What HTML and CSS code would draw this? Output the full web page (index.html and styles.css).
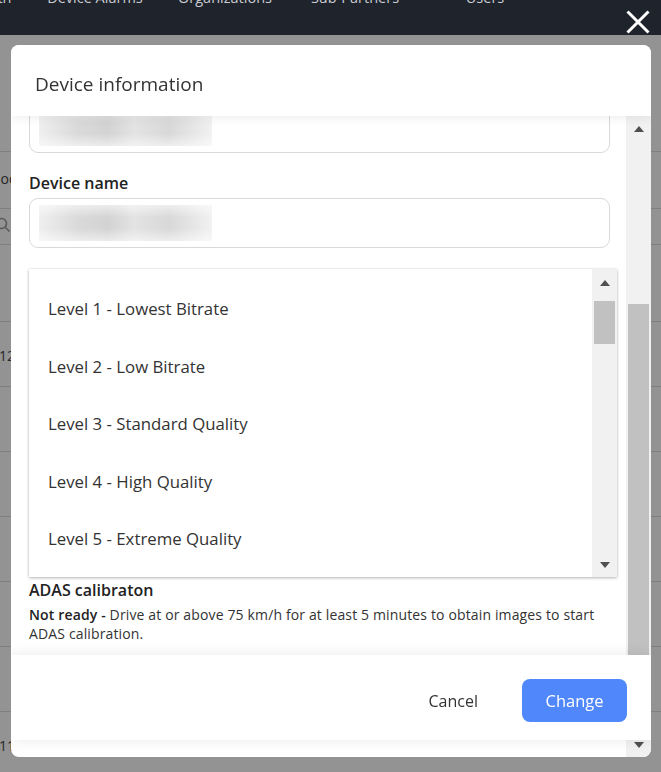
FILE: index.html
```html
<!DOCTYPE html>
<html lang="en">
<head>
    <meta charset="UTF-8">
    <meta name="viewport" content="width=device-width, initial-scale=1.0">
    <title>Device information</title>
    <link rel="stylesheet" href="styles.css">
</head>
<body>
    <div class="topbar">
        <nav class="nav">
            <span>Device Health</span>
            <span>Device Alarms</span>
            <span>Organizations</span>
            <span>Sub-Partners</span>
            <span>Users</span>
        </nav>
    </div>

    <div class="page">
        <div class="toolbar"></div>
        <div class="filter-row"><span class="cut-text">Mode</span></div>
        <div class="search-row">
            <svg class="search-icon" width="16" height="16" viewBox="0 0 16 16">
                <circle cx="6.5" cy="6.5" r="5" fill="none" stroke="#9a9a9a" stroke-width="1.6"/>
                <line x1="10.2" y1="10.2" x2="14.5" y2="14.5" stroke="#9a9a9a" stroke-width="1.6"/>
            </svg>
        </div>
        <div class="table-head"></div>
        <div class="row"><span class="cut-text">12:04</span></div>
        <div class="row"></div>
        <div class="row"></div>
        <div class="row"></div>
        <div class="row"></div>
        <div class="row"></div>
        <div class="row"><span class="cut-text">11:52</span></div>
    </div>

    <div class="backdrop"></div>

    <button class="close-btn" aria-label="Close">
        <svg width="24" height="24" viewBox="0 0 24 24">
            <path d="M1.5 1.5 L22.5 22.5 M22.5 1.5 L1.5 22.5" stroke="#fff" stroke-width="3" fill="none"/>
        </svg>
    </button>

    <div class="modal">
        <div class="modal-header">Device information</div>

        <div class="modal-body">
            <div class="body-content">
                <div class="field first">
                    <div class="blurred"></div>
                </div>

                <label class="field-label">Device name</label>
                <div class="field">
                    <div class="blurred"></div>
                </div>

                <div class="dropdown">
                    <ul class="options">
                        <li>Level 1 - Lowest Bitrate</li>
                        <li>Level 2 - Low Bitrate</li>
                        <li>Level 3 - Standard Quality</li>
                        <li>Level 4 - High Quality</li>
                        <li>Level 5 - Extreme Quality</li>
                    </ul>
                    <div class="scrollbar small">
                        <div class="sb-btn"><span class="arrow up"></span></div>
                        <div class="sb-track"><div class="sb-thumb"></div></div>
                        <div class="sb-btn"><span class="arrow down"></span></div>
                    </div>
                </div>

                <h3 class="section-title">ADAS calibraton</h3>
                <p class="section-text"><strong>Not ready - </strong>Drive at or above 75 km/h for at least 5 minutes to obtain images to start ADAS calibration.</p>
            </div>

            <div class="scrollbar main">
                <div class="sb-btn"><span class="arrow up"></span></div>
                <div class="sb-track"><div class="sb-thumb"></div></div>
                <div class="sb-btn"><span class="arrow down"></span></div>
            </div>
        </div>

        <div class="modal-footer">
            <button class="btn-cancel">Cancel</button>
            <button class="btn-primary">Change</button>
        </div>
    </div>
</body>
</html>
```

FILE: styles.css
```css
* {
    box-sizing: border-box;
}

body {
    margin: 0;
    font-family: 'Open Sans', 'Noto Sans', sans-serif;
    color: #333;
    background: #fff;
    overflow: hidden;
    height: 772px;
}

/* page behind the dialog */
.topbar {
    height: 35px;
    background: #1f232b;
    overflow: hidden;
}

.nav {
    display: flex;
    margin-left: -100px;
    margin-top: -12px;
}

.nav span {
    width: 130px;
    flex: none;
    text-align: center;
    font-size: 14.5px;
    line-height: 20px;
    color: #c9ccd2;
}

.page {
    position: relative;
}

.toolbar {
    height: 117px;
    border-bottom: 1px solid #dcdcdc;
}

.filter-row {
    height: 57px;
    border-bottom: 1px solid #dcdcdc;
    padding-top: 17px;
}

.cut-text {
    display: block;
    margin-left: -12px;
    font-size: 14px;
    line-height: 20px;
    color: #444;
}

.search-row {
    height: 36px;
    border-bottom: 1px solid #dcdcdc;
    padding: 8px 0 0 0;
}

.search-icon {
    display: block;
    margin-left: -5px;
}

.table-head {
    height: 77px;
    border-bottom: 1px solid #dcdcdc;
}

.row {
    height: 65px;
    border-bottom: 1px solid #dcdcdc;
    padding-top: 24px;
}

.row .cut-text {
    margin-left: -1px;
}

.backdrop {
    position: fixed;
    top: 35px;
    left: 0;
    right: 0;
    bottom: 0;
    background: rgba(0, 0, 0, 0.425);
}

.close-btn {
    position: fixed;
    top: 10px;
    left: 626px;
    width: 24px;
    height: 24px;
    padding: 0;
    border: none;
    background: none;
    cursor: pointer;
}

.close-btn svg {
    display: block;
}

/* dialog */
.modal {
    position: fixed;
    top: 45px;
    left: 11px;
    width: 640px;
    height: 712px;
    background: #fff;
    border-radius: 8px;
    overflow: hidden;
    display: flex;
    flex-direction: column;
}

.modal-header {
    position: relative;
    z-index: 2;
    height: 71px;
    flex: none;
    padding: 26px 24px 0;
    font-size: 19px;
    line-height: 26px;
    color: #333;
    background: #fff;
    box-shadow: 0 2px 10px rgba(0, 0, 0, 0.07);
}

.modal-body {
    flex: 1;
    display: flex;
    min-height: 0;
}

.body-content {
    flex: 1;
    padding: 0 16px 0 18px;
    overflow: hidden;
}

.field {
    height: 50px;
    border: 1px solid #d9d9d9;
    border-radius: 9px;
    padding: 6px 9px;
}

.field.first {
    margin-top: -13px;
}

.blurred {
    width: 173px;
    height: 36px;
    background:
        linear-gradient(180deg, rgba(255, 255, 255, 0.55), rgba(255, 255, 255, 0) 35%, rgba(255, 255, 255, 0) 65%, rgba(255, 255, 255, 0.55)),
        linear-gradient(90deg, #efefef 0%, #dadada 22%, #d3d3d3 40%, #e3e3e3 55%, #d8d8d8 75%, #f1f1f1 100%);
}

.field-label {
    display: block;
    margin-top: 19px;
    margin-bottom: 4px;
    font-size: 16px;
    font-weight: 600;
    line-height: 22px;
    color: #222;
}

.dropdown {
    display: flex;
    height: 308px;
    margin-top: 21px;
    margin-right: -7px;
    background: #fff;
    box-shadow: 0 1px 3px rgba(0, 0, 0, 0.28), 0 0 1px rgba(0, 0, 0, 0.12);
}

.options {
    flex: 1;
    list-style: none;
    margin: 0;
    padding: 11px 0 0;
    overflow: hidden;
}

.options li {
    padding: 18px 19px;
    font-size: 16.8px;
    line-height: 21.5px;
    color: #333;
}

.section-title {
    margin: 2px 0 0;
    font-size: 16px;
    font-weight: 600;
    line-height: 22px;
    color: #222;
}

.section-text {
    margin: 4px 0 0;
    font-size: 14px;
    letter-spacing: 0.14px;
    line-height: 19px;
    color: #333;
}

.section-text strong {
    font-weight: 600;
    color: #222;
}

/* scrollbars */
.scrollbar {
    width: 25px;
    flex: none;
    display: flex;
    flex-direction: column;
    background: #f1f1f1;
}

.sb-btn {
    height: 25px;
    flex: none;
    display: flex;
    align-items: center;
    justify-content: center;
}

.sb-track {
    flex: 1;
    padding: 0 2px;
}

.sb-thumb {
    background: #c1c1c1;
}

.scrollbar.main .sb-thumb {
    margin-top: 163px;
    height: 420px;
}

.scrollbar.small .sb-btn:first-child {
    height: 27px;
}

.scrollbar.small .sb-thumb {
    margin-top: 5px;
    height: 43px;
}

.arrow {
    width: 0;
    height: 0;
    border-left: 5px solid transparent;
    border-right: 5px solid transparent;
}

.arrow.up {
    border-bottom: 6px solid #505050;
}

.arrow.down {
    border-top: 6px solid #505050;
}

/* footer sits over the scrolling body */
.modal-footer {
    position: absolute;
    z-index: 3;
    left: 0;
    right: 0;
    bottom: 17px;
    height: 85px;
    display: flex;
    justify-content: flex-end;
    align-items: flex-start;
    gap: 22px;
    padding: 24px 24px 0;
    background: #fff;
    box-shadow: 0 0 14px rgba(0, 0, 0, 0.09);
}

.btn-cancel {
    height: 43px;
    padding: 0 22px;
    border: none;
    background: none;
    font-family: inherit;
    font-size: 16px;
    color: #333;
    cursor: pointer;
}

.btn-primary {
    width: 105px;
    height: 43px;
    border: none;
    border-radius: 8px;
    background: #5087fb;
    color: #fff;
    font-family: inherit;
    font-size: 16.5px;
    cursor: pointer;
}
```
